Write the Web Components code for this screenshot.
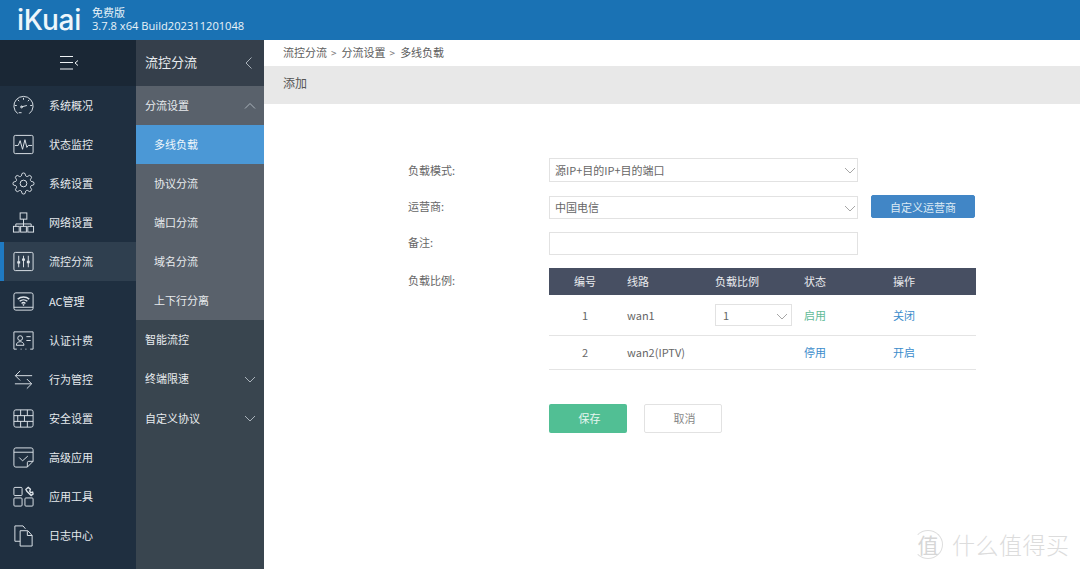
<!DOCTYPE html>
<html lang="zh-CN"><head><meta charset="utf-8"><title>iKuai</title>
<style>
html,body{margin:0;padding:0;height:100%;overflow:hidden;background:#fff}
body{font:11px "Noto Sans CJK SC","Noto Sans",sans-serif;position:relative}
</style></head><body>
<ik-app>
  <ik-header slot="header" edition="免费版" build="3.7.8 x64 Build202311201048"></ik-header>
  <ik-nav slot="nav">
    <ik-nav-item label="系统概况"><svg viewBox="0 0 24 24"><path d="M6 20.500A10 10 0 1 1 18 20.500"/><path d="M9.500 13.500l6-1.500M12 4v2M5 12H3M21 12h-2M6 6l1.500 1.500M18 6l-1.500 1.500M7 19.500h3"/><circle cx="10" cy="13.500" r="1"/></svg></ik-nav-item>
    <ik-nav-item label="状态监控"><svg viewBox="0 0 24 24"><rect x="2" y="2.500" width="20" height="19" rx="1.500"/><path d="M3 13h3.500l2-5 2.500 9 2.500-10 2 8 1.500-2H21"/></svg></ik-nav-item>
    <ik-nav-item label="系统设置"><svg viewBox="0 0 24 24"><circle cx="12" cy="12" r="3.500"/><path d="M19.400 15a1.650 1.650 0 0 0 .33 1.820l.06.06a2 2 0 0 1 0 2.830 2 2 0 0 1-2.830 0l-.06-.06a1.650 1.650 0 0 0-1.820-.33 1.650 1.650 0 0 0-1 1.510V21a2 2 0 0 1-2 2 2 2 0 0 1-2-2v-.09A1.650 1.650 0 0 0 9 19.400a1.650 1.650 0 0 0-1.820.33l-.06.06a2 2 0 0 1-2.830 0 2 2 0 0 1 0-2.830l.06-.06a1.650 1.650 0 0 0 .33-1.820 1.650 1.650 0 0 0-1.510-1H3a2 2 0 0 1-2-2 2 2 0 0 1 2-2h.09A1.650 1.650 0 0 0 4.600 9a1.650 1.650 0 0 0-.33-1.820l-.06-.06a2 2 0 0 1 0-2.830 2 2 0 0 1 2.830 0l.06.06a1.650 1.650 0 0 0 1.820.33H9a1.650 1.650 0 0 0 1-1.510V3a2 2 0 0 1 2-2 2 2 0 0 1 2 2v.09a1.650 1.650 0 0 0 1 1.510 1.650 1.650 0 0 0 1.820-.33l.06-.06a2 2 0 0 1 2.830 0 2 2 0 0 1 0 2.830l-.06.06a1.650 1.650 0 0 0-.33 1.820V9a1.650 1.650 0 0 0 1.510 1H21a2 2 0 0 1 2 2 2 2 0 0 1-2 2h-.09a1.650 1.650 0 0 0-1.510 1z"/></svg></ik-nav-item>
    <ik-nav-item label="网络设置"><svg viewBox="0 0 24 24"><rect x="8.500" y="2" width="7" height="6.500"/><path d="M12 8.500v5M4 16v-2.500h16V16M12 13.500V16"/><rect x="1.500" y="16" width="6" height="6"/><rect x="9" y="16" width="6" height="6"/><rect x="16.500" y="16" width="6" height="6"/></svg></ik-nav-item>
    <ik-nav-item label="流控分流" active><svg viewBox="0 0 24 24"><rect x="2" y="2.500" width="20" height="19" rx="1.500"/><path d="M7 6v12M12 6v12M17 6v12"/><path d="M5.500 13h3M10.500 10h3M15.500 12.500h3" stroke-width="2.400"/></svg></ik-nav-item>
    <ik-nav-item label="AC管理"><svg viewBox="0 0 24 24"><rect x="2" y="3" width="20" height="18" rx="2"/><path d="M2 18h20"/><path d="M6 9.500a9 9 0 0 1 12 0M8 11.800a6 6 0 0 1 8 0M10 14a3 3 0 0 1 4 0" stroke-width="1.500"/><circle cx="12" cy="15.500" r=".6"/></svg></ik-nav-item>
    <ik-nav-item label="认证计费"><svg viewBox="0 0 24 24"><path d="M5 21H2V3h20v18h-3M9 21h1M14 21h1"/><circle cx="8.500" cy="9.500" r="2.500"/><path d="M4.500 17c0-5 8-5 8 0zM15 8h4.500M15 12h4.500"/></svg></ik-nav-item>
    <ik-nav-item label="行为管控"><svg viewBox="0 0 24 24"><path d="M21 8H3.500M8.500 3l-5 5 5 5M3 16.500h17.500M15.500 11.500l5 5-5 5"/></svg></ik-nav-item>
    <ik-nav-item label="安全设置"><svg viewBox="0 0 24 24"><rect x="2" y="3" width="20" height="18" rx="2"/><path d="M2 9h20M2 15h20M9 3v6M16 3v6M6 9v6M13 9v6M9 15v6M16 15v6"/></svg></ik-nav-item>
    <ik-nav-item label="高级应用"><svg viewBox="0 0 24 24"><path d="M16 22H4a2 2 0 0 1-2-2V4a2 2 0 0 1 2-2h16a2 2 0 0 1 2 2v12zM16 22v-4.500a1.500 1.500 0 0 1 1.500-1.500H22M2 6.500h20M7.500 12l3.500 3.500 5.500-5"/></svg></ik-nav-item>
    <ik-nav-item label="应用工具"><svg viewBox="0 0 24 24"><rect x="2" y="2.500" width="8.500" height="8.500" rx="1"/><rect x="2" y="13.500" width="8.500" height="8.500" rx="1"/><rect x="13.500" y="13.500" width="8.500" height="8.500" rx="1"/><path d="M17 2.500l-2.500 2 1 2 4.500 4.500 2-1.500-.5-2-2 .5-1-1.500.7-2z" stroke-width="1.400"/></svg></ik-nav-item>
    <ik-nav-item label="日志中心"><svg viewBox="0 0 24 24"><path d="M8.500 18H3V2h8.500L14 5"/><path d="M8.500 7h8l4.500 5v11H8.500zM16 7.500V12h5"/></svg></ik-nav-item>
  </ik-nav>
  <ik-submenu slot="sub" title="流控分流">
    <ik-sub-group label="分流设置" open>
      <ik-sub-item active>多线负载</ik-sub-item>
      <ik-sub-item>协议分流</ik-sub-item>
      <ik-sub-item>端口分流</ik-sub-item>
      <ik-sub-item>域名分流</ik-sub-item>
      <ik-sub-item>上下行分离</ik-sub-item>
    </ik-sub-group>
    <ik-sub-group label="智能流控" leaf></ik-sub-group>
    <ik-sub-group label="终端限速"></ik-sub-group>
    <ik-sub-group label="自定义协议"></ik-sub-group>
  </ik-submenu>
  <ik-crumbs slot="main"><span>流控分流</span><span>分流设置</span><span>多线负载</span></ik-crumbs>
  <ik-titlebar slot="main">添加</ik-titlebar>
  <ik-form slot="main">
    <ik-row label="负载模式:" style="--rh:24px;--lh:25px;--mb:14px"><ik-select style="height:24px">源IP+目的IP+目的端口</ik-select></ik-row>
    <ik-row label="运营商:"><ik-select>中国电信</ik-select><ik-button slot="after" kind="blue" style="margin-top:-1px">自定义运营商</ik-button></ik-row>
    <ik-row label="备注:"><ik-input></ik-input></ik-row>
    <ik-row label="负载比例:" wide style="--lh:24px">
      <ik-table>
        <ik-tr head style="padding-bottom:1px"><ik-td center>编号</ik-td><ik-td>线路</ik-td><ik-td>负载比例</ik-td><ik-td>状态</ik-td><ik-td>操作</ik-td></ik-tr>
        <ik-tr style="--h:41px"><ik-td center>1</ik-td><ik-td>wan1</ik-td><ik-td><ik-select small>1</ik-select></ik-td><ik-td color="#5fbb97">启用</ik-td><ik-td color="#3a8ccb">关闭</ik-td></ik-tr>
        <ik-tr style="--h:34px;padding-bottom:1px"><ik-td center>2</ik-td><ik-td>wan2(IPTV)</ik-td><ik-td></ik-td><ik-td color="#3a8ccb">停用</ik-td><ik-td color="#3a8ccb">开启</ik-td></ik-tr>
      </ik-table>
    </ik-row>
    <ik-actions><ik-button kind="green" big>保存</ik-button><ik-button kind="plain" big>取消</ik-button></ik-actions>
  </ik-form>
</ik-app>
<ik-watermark></ik-watermark>
<script>
const CJK='"Noto Sans CJK SC","Noto Sans",sans-serif';
function def(name,html){
  customElements.define(name,class extends HTMLElement{
    connectedCallback(){
      if(this.shadowRoot)return;
      const r=this.attachShadow({mode:'open'});
      r.innerHTML=typeof html==='function'?html(this):html;
    }
  });
}
const chev=(d,c='#b7bfc6',s=12)=>`<svg width="${s}" height="${s}" viewBox="0 0 12 12" fill="none" stroke="${c}" stroke-width="1"><path d="${d}"/></svg>`;
const DOWN='M1 4l5 5 5-5',UP='M1 8.500l5-5 5 5',LEFT='M8.500 .5L3 6l5.500 5.500';

def('ik-app',`<style>
:host{display:grid;grid-template:40px 529px/136px 128px 1fr;width:1080px;height:569px;overflow:hidden}
.h{grid-column:1/4;display:block}
.m{display:flex;flex-direction:column;min-width:0}
</style>
<div class="h"><slot name="header"></slot></div>
<slot name="nav"></slot><slot name="sub"></slot>
<div class="m"><slot name="main"></slot></div>`);

def('ik-header',e=>`<style>
:host{display:flex;align-items:center;height:40px;background:#1a72b4;color:#fff;padding-left:17px;box-sizing:border-box}
.logo{font:500 28px/40px Inter,sans-serif;letter-spacing:-.2px;width:75px;color:#eef6fb;flex:none;padding-bottom:3px;box-sizing:border-box;height:40px}
.t{font:11px/13px ${CJK};color:#e9f2f8;margin-top:-3px}
.b{font:11.150px/13px "Open Sans",sans-serif;white-space:nowrap}
</style><div class="logo">iKuai</div><div class="t"><div>${e.getAttribute('edition')}</div><div class="b">${e.getAttribute('build')}</div></div>`);

def('ik-nav',`<style>
:host{display:flex;flex-direction:column;background:#1f2f40;height:529px}
.top{height:46px;background:#1a2735;display:flex;align-items:center;justify-content:center;flex:none;padding-left:4px;box-sizing:border-box}
</style>
<div class="top"><svg width="22" height="20" viewBox="0 0 22 20" fill="none" stroke="#eef2f5" stroke-width="1"><path d="M1 3.500h13M1 9.500h13M1 16h13M19 7.500l-3 2.500 3 2.500"/></svg></div>
<slot></slot>`);

def('ik-nav-item',e=>`<style>
:host{display:flex;align-items:center;height:39.100px;box-sizing:border-box;color:#e6eaee;font-size:11px;flex:none}
:host([active]){background:#2f3f4f;box-shadow:inset 4px 0 0 #1f7ac2}
.i{width:49px;display:flex;justify-content:center;box-sizing:border-box;flex:none}
span{padding-bottom:1px}
::slotted(svg){width:23px;height:23px;fill:none;stroke:#dfe5ea;stroke-width:1;margin-left:-2px;display:block}
</style><div class="i"><slot></slot></div><span>${e.getAttribute('label')}</span>`);

def('ik-submenu',e=>`<style>
:host{display:flex;flex-direction:column;background:#39454f;height:529px;color:#e8ebee}
.top{height:46px;flex:none;display:flex;align-items:center;justify-content:space-between;padding:0 9px 0 9px;font-size:13px;background:#353f4b;box-sizing:border-box}
.top span{padding-bottom:3px}
</style><div class="top"><span>${e.getAttribute('title')}</span>${chev(LEFT,'#aab2ba',12)}</div><slot></slot>`);

def('ik-sub-group',e=>{
  const open=e.hasAttribute('open'),leaf=e.hasAttribute('leaf');
  return `<style>
:host{display:block;font-size:11px}
.r{height:39.200px;display:flex;align-items:center;justify-content:space-between;padding:0 8px 0 9px;box-sizing:border-box;${open?'background:#59616b':''}}
.r span{padding-bottom:1px}
.l{background:#59616b}
</style><div class="r"><span>${e.getAttribute('label')}</span>${leaf?'':chev(open?UP:DOWN,'#aab3bb',12)}</div><div class="l"><slot></slot></div>`});

def('ik-sub-item',`<style>
:host{display:flex;align-items:center;height:39px;padding:0 0 1px 18px;box-sizing:border-box;font-size:11px;color:#e8ebee}
:host([active]){background:#4b98d6;color:#eef6fb}
</style><slot></slot>`);

def('ik-crumbs',`<style>
:host{display:flex;align-items:center;height:26px;padding:0 0 2px 19px;box-sizing:border-box;font-size:11px;color:#5d5d5d;white-space:pre}
::slotted(span:not(:last-child))::after{content:">";margin:0 5px 0 4px;font-size:10px;color:#777}
</style><slot></slot>`);

def('ik-titlebar',`<style>
:host{display:flex;align-items:center;height:38px;background:#e8e8e8;padding:0 0 5px 19px;box-sizing:border-box;font-size:12px;color:#555}
</style><slot></slot>`);

def('ik-form',`<style>
:host{display:flex;flex-direction:column;padding:54px 0 0 144px;color:#666;font-size:11px}
</style><slot></slot>`);

def('ik-row',e=>`<style>
:host{display:flex;margin-bottom:var(--mb,13px);height:var(--rh,23px)}
:host([wide]){height:auto;margin-bottom:0}
.l{width:141px;flex:none;line-height:var(--lh,21px);color:#666}
.c{display:flex;gap:13px;align-items:flex-start}
</style><div class="l">${e.getAttribute('label')}</div><div class="c"><slot></slot><slot name="after"></slot></div>`);

def('ik-select',e=>`<style>
:host{display:flex;align-items:center;justify-content:space-between;width:309px;height:23px;box-sizing:border-box;border:1px solid #e2e2e2;padding:0 1px 1px 5px;color:#666;font-size:11px;background:#fff}
:host([small]){width:77px;height:22px;padding-left:7px;padding-right:3px;padding-bottom:0}
svg{margin-top:1px}
</style><span><slot></slot></span>${chev(DOWN,'#a6a6a6',12)}`);

def('ik-input',`<style>
:host{display:block;width:309px;height:23px;box-sizing:border-box;border:1px solid #e2e2e2;background:#fff}
</style>`);

def('ik-button',`<style>
:host{display:flex;align-items:center;justify-content:center;width:104px;height:23px;box-sizing:border-box;font-size:11px;border-radius:2px;flex:none}
:host([kind=blue]){background:#4186c6;color:#dceaf5;border:1px solid #4186c6}
:host([kind=green]){background:#51bf94;color:#e7f6f0}
:host([kind=plain]){background:#fff;border:1px solid #e2e2e2;color:#888}
:host([big]){width:78px;height:29px;padding:0 0 1px 3px}
</style><slot></slot>`);

def('ik-table',`<style>
:host{display:block;width:427px}
</style><slot></slot>`);

def('ik-tr',`<style>
:host{display:grid;grid-template-columns:72px 88px 89px 89px 89px;height:var(--h,27px);align-items:center;border-bottom:1px solid #e4e4e4;box-sizing:border-box;color:#666}
:host([head]){background:#474f62;color:#e9ebef;border:0}
</style><slot></slot>`);

def('ik-td',e=>`<style>
:host{display:block;padding-left:6px;min-width:0;white-space:nowrap${e.getAttribute('color')?';color:'+e.getAttribute('color'):''}}
:host([center]){padding:0;text-align:center}
</style><slot></slot>`);

def('ik-actions',`<style>
:host{display:flex;gap:17px;margin:34px 0 0 141px}
</style><slot></slot>`);

def('ik-watermark',`<style>
:host{position:absolute;left:913px;top:530px;display:flex;align-items:center;gap:9px;color:#dcdcdc;font-family:${CJK}}
.c{width:28px;height:27px;border-radius:50%;border:1px solid #dedede;border-left-color:transparent;display:flex;align-items:center;justify-content:center;font-size:21px;line-height:27px;color:#d6d6d6}
.t{font-size:23px;letter-spacing:.5px;white-space:nowrap;font-weight:300;line-height:27px}
</style><div class="c">值</div><div class="t">什么值得买</div>`);
</script>
</body></html>
